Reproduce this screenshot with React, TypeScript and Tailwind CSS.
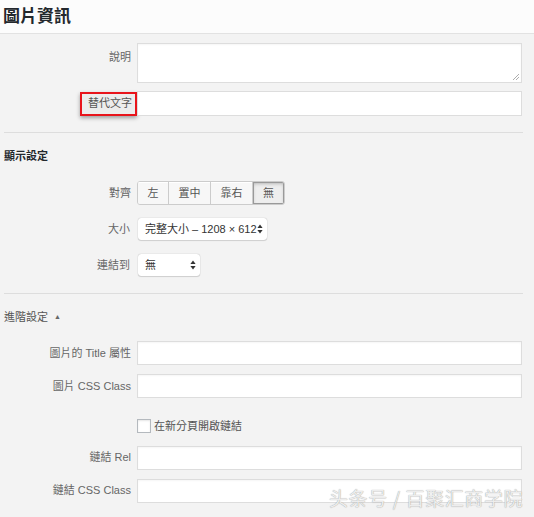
import React from "react";

const font = "font-['Liberation_Sans','Noto_Sans_CJK_TC',sans-serif]";

const Field: React.FC<{ label: string; className?: string }> = ({ label, className }) => (
  <div className={`flex items-center ${className ?? ""}`}>
    <div className="w-[137px] shrink-0 pr-[6px] text-right text-[11px] text-[#666]">{label}</div>
    <div className="h-[24px] flex-1 border border-[#ddd] bg-white shadow-[inset_0_1px_2px_rgba(0,0,0,0.04)]" />
  </div>
);

const UpDown = () => (
  <svg width="6" height="10" viewBox="0 0 6 10" className="shrink-0">
    <path d="M3 0.5 L5.6 4 H0.4 Z" fill="#333" />
    <path d="M3 9.5 L5.6 6 H0.4 Z" fill="#333" />
  </svg>
);

export default function App() {
  const align = [
    { t: "左", w: "w-[31px]" },
    { t: "置中", w: "w-[42px]" },
    { t: "靠右", w: "w-[42px]" },
  ];

  return (
    <div className={`relative h-[517px] w-[534px] overflow-hidden bg-[#f3f3f3] ${font}`}>
      {/* header */}
      <div className="flex h-[34px] items-center border-b border-[#e2e2e2] bg-[#fcfcfc] pl-[3px]">
        <h1 className="text-[17px] font-bold leading-none text-[#23282d]">圖片資訊</h1>
      </div>

      <div className="pr-[12px] pt-[9px]">
        {/* caption */}
        <div className="flex items-start">
          <div className="w-[137px] shrink-0 pr-[6px] pt-[6px] text-right text-[11px] text-[#666]">說明</div>
          <div className="relative h-[40px] flex-1 border border-[#ddd] bg-white shadow-[inset_0_1px_2px_rgba(0,0,0,0.04)]">
            <svg width="8" height="8" viewBox="0 0 8 8" className="absolute bottom-[1px] right-[1px]">
              <path d="M7 1 L1 7 M7 4 L4 7" stroke="#999" strokeWidth="0.8" />
            </svg>
          </div>
        </div>

        {/* alt text */}
        <div className="mt-[8px] flex items-center">
          <div className="flex w-[137px] shrink-0 justify-end">
            <span className="flex h-[24px] items-center border-2 border-[#e8141b] bg-[#ececec] pl-[6px] pr-[3px] text-[11px] text-[#555] shadow-[0_2px_4px_rgba(0,0,0,0.35)]">
              替代文字
            </span>
          </div>
          <div className="h-[25px] flex-1 border border-[#ddd] bg-white" />
        </div>
      </div>

      <div className="ml-[4px] mr-[11px] mt-[16px] border-t border-[#ddd]" />

      {/* display settings */}
      <div className="pl-[4px] pt-[15px] text-[11px] font-bold leading-[16px] text-[#23282d]">顯示設定</div>

      <div className="pr-[12px]">
        <div className="mt-[17px] flex items-center">
          <div className="w-[137px] shrink-0 pr-[6px] text-right text-[11px] text-[#666]">對齊</div>
          <div className="flex h-[24px] overflow-hidden rounded-[3px] border border-[#ccc] text-[11px] text-[#555]">
            {align.map((a) => (
              <div
                key={a.t}
                className={`${a.w} flex items-center justify-center border-r border-[#ccc] bg-[#f7f7f7] shadow-[inset_0_1px_0_#fff]`}
              >
                {a.t}
              </div>
            ))}
            <div className="flex w-[31px] items-center justify-center border border-[#999] bg-[#eee] shadow-[inset_0_2px_5px_-3px_rgba(0,0,0,0.5)]">
              無
            </div>
          </div>
        </div>

        <div className="mt-[13px] flex items-center">
          <div className="w-[137px] shrink-0 pr-[7px] text-right text-[11px] text-[#666]">大小</div>
          <div className="ml-[1px] flex h-[22px] w-[129px] items-center justify-between rounded-[3px] bg-white pl-[7px] pr-[4px] text-[11px] text-[#333] shadow-[0_0_1px_rgba(0,0,0,0.35),0_1px_1px_rgba(0,0,0,0.12)]">
            <span>完整大小 – 1208 × 612</span>
            <UpDown />
          </div>
        </div>

        <div className="mt-[14px] flex items-center">
          <div className="w-[137px] shrink-0 pr-[7px] text-right text-[11px] text-[#666]">連結到</div>
          <div className="ml-[1px] flex h-[22px] w-[62px] items-center justify-between rounded-[3px] bg-white pl-[7px] pr-[4px] text-[11px] text-[#333] shadow-[0_0_1px_rgba(0,0,0,0.35),0_1px_1px_rgba(0,0,0,0.12)]">
            <span>無</span>
            <UpDown />
          </div>
        </div>
      </div>

      <div className="ml-[4px] mr-[11px] mt-[17px] border-t border-[#ddd]" />

      {/* advanced */}
      <div className="flex items-center gap-[6px] pl-[4px] pt-[15px] text-[11px] leading-[16px] text-[#555]">
        <span>進階設定</span>
        <span className="text-[7px] text-[#666]">▲</span>
      </div>

      <div className="pr-[12px]">
        <Field label="圖片的 Title 屬性" className="mt-[16px]" />
        <Field label="圖片 CSS Class" className="mt-[9px]" />

        <div className="mt-[20px] flex items-center">
          <div className="w-[137px] shrink-0" />
          <div className="h-[14px] w-[14px] border border-[#b4b9be] bg-white shadow-[inset_0_1px_2px_rgba(0,0,0,0.1)]" />
          <span className="ml-[3px] text-[11px] text-[#555]">在新分頁開啟鏈結</span>
        </div>

        <Field label="鏈結 Rel" className="mt-[11px]" />
        <Field label="鏈結 CSS Class" className="mt-[9px]" />
      </div>

      {/* watermark */}
      <div className="absolute left-[329px] top-[487px] font-['Noto_Sans_CJK_SC',sans-serif] text-[19px] font-normal leading-[22px] tracking-[0.6px] text-[#ededed] [text-shadow:0_0_1px_#8a8a8a]">
        头条号 / 百聚汇商学院
      </div>
    </div>
  );
}
